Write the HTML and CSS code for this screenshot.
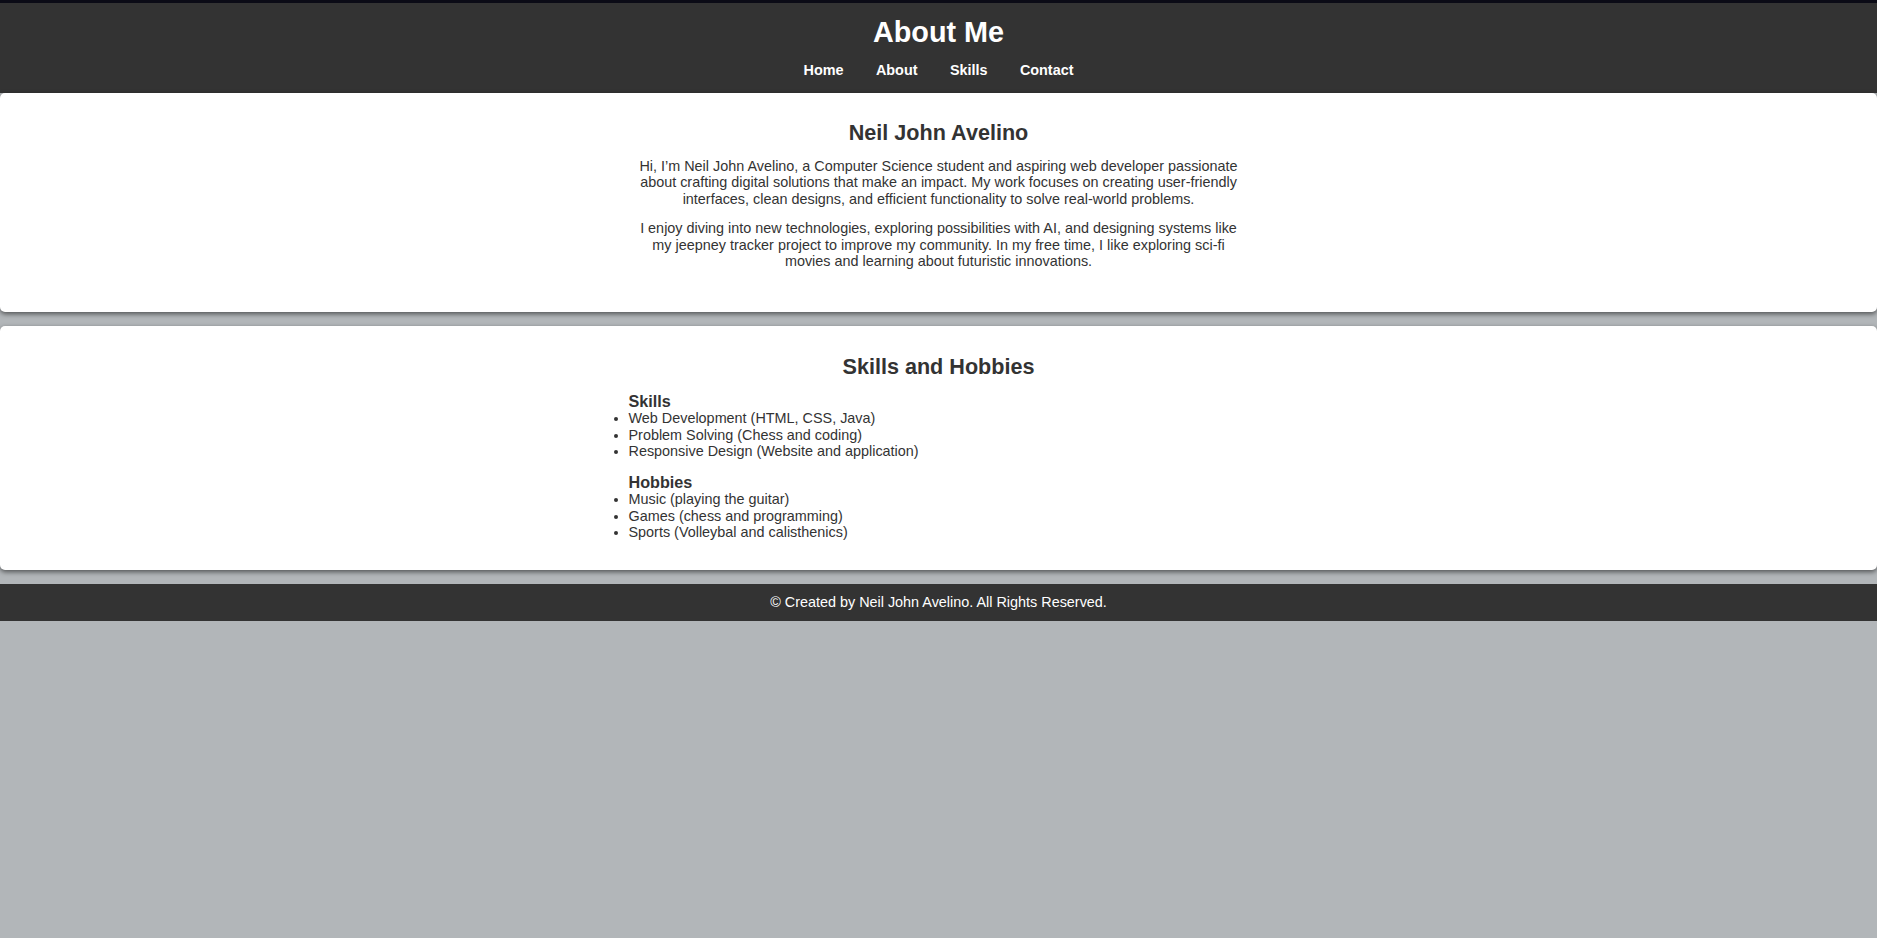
FILE: index.html
```html
<!DOCTYPE html>
<html lang="en">
<head>
<meta charset="UTF-8">
<title>About Me</title>
<link rel="stylesheet" href="styles.css">
</head>
<body>
<header class="site-header">
  <h1 class="site-title">About Me</h1>
  <nav class="site-nav">
    <a href="#" class="nav-link">Home</a>
    <a href="#" class="nav-link">About</a>
    <a href="#" class="nav-link">Skills</a>
    <a href="#" class="nav-link">Contact</a>
  </nav>
</header>
<main class="content">
  <section class="card">
    <h2 class="card-title">Neil John Avelino</h2>
    <div class="about-text">
      <p class="para">Hi, I’m Neil John Avelino, a Computer Science student and aspiring web developer passionate about crafting digital solutions that make an impact. My work focuses on creating user-friendly interfaces, clean designs, and efficient functionality to solve real-world problems.</p>
      <p class="para">I enjoy diving into new technologies, exploring possibilities with AI, and designing systems like my jeepney tracker project to improve my community. In my free time, I like exploring sci-fi movies and learning about futuristic innovations.</p>
    </div>
  </section>
  <section class="card card-skills">
    <h2 class="card-title">Skills and Hobbies</h2>
    <div class="lists">
      <h3 class="list-title">Skills</h3>
      <ul class="list">
        <li>Web Development (HTML, CSS, Java)</li>
        <li>Problem Solving (Chess and coding)</li>
        <li>Responsive Design (Website and application)</li>
      </ul>
      <h3 class="list-title">Hobbies</h3>
      <ul class="list list-last">
        <li>Music (playing the guitar)</li>
        <li>Games (chess and programming)</li>
        <li>Sports (Volleybal and calisthenics)</li>
      </ul>
    </div>
  </section>
</main>
<footer class="site-footer">
  <p class="footer-text">© Created by Neil John Avelino. All Rights Reserved.</p>
</footer>
</body>
</html>
```
FILE: styles.css
```css
* { box-sizing: border-box; }

html, body {
  margin: 0;
  padding: 0;
}

body {
  background: #b2b6b9;
  font-family: "Liberation Sans", Arial, sans-serif;
  font-size: 14.4px;
  line-height: 16.5px;
  color: #333;
  min-height: 938px;
}

.site-header {
  background: #333;
  border-top: 3px solid #0b0b16;
  color: #fff;
  text-align: center;
  padding: 13px 0 14px;
}

.site-title {
  margin: 0;
  font-size: 28.8px;
  line-height: 33px;
  font-weight: bold;
}

.site-nav {
  margin-top: 13px;
  display: flex;
  justify-content: center;
  gap: 32.4px;
}

.nav-link {
  color: #fff;
  text-decoration: none;
  font-weight: bold;
  font-size: 14.4px;
  line-height: 16.5px;
}

.content {
  display: flex;
  flex-direction: column;
}

.card {
  background: #fff;
  border-radius: 5px;
  box-shadow: 0 2px 5px rgba(0, 0, 0, 0.55);
  padding: 28.6px 20px 29px;
  margin-bottom: 14.4px;
  text-align: center;
}

.card-title {
  margin: 0 0 12px;
  font-size: 21.6px;
  line-height: 24.8px;
  font-weight: bold;
  color: #333;
}

.about-text {
  max-width: 600px;
  margin: 0 auto;
}

.para {
  margin: 0 0 13px;
}

.lists {
  width: 620px;
  margin: 0 auto;
  text-align: left;
}

.list-title {
  margin: 0;
  font-size: 16.2px;
  line-height: 18.6px;
  font-weight: bold;
  color: #333;
}

.list {
  margin: 0 0 13px;
  padding: 0;
  list-style: disc outside;
}

.list-last {
  margin-bottom: 0;
}

.site-footer {
  background: #333;
  color: #fff;
  text-align: center;
  padding: 9.8px 0 10.8px;
}

.footer-text {
  margin: 0;
}
```
